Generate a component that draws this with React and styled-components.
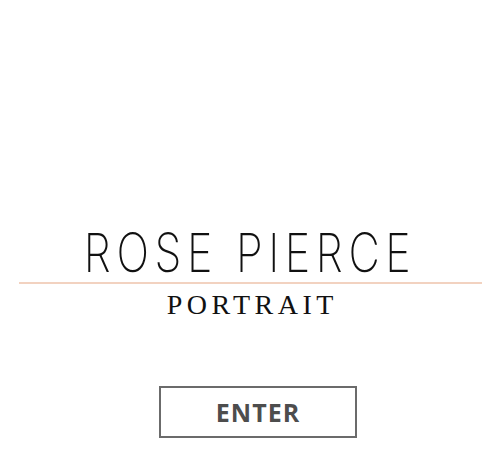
import * as React from 'react';
import styled, { createGlobalStyle } from 'styled-components';

const GlobalStyle = createGlobalStyle`
  html, body {
    margin: 0;
    padding: 0;
    background: #fff;
  }
`;

const Page = styled.div`
  width: 500px;
  height: 462px;
  display: flex;
  flex-direction: column;
  align-items: center;
  padding-top: 226px;
  box-sizing: border-box;
`;

const Title = styled.h1`
  margin: 0;
  font-family: Inter, 'DejaVu Sans', sans-serif;
  font-weight: 200;
  font-size: 54px;
  line-height: 54px;
  letter-spacing: 7px;
  text-indent: 7px;
  color: #111;
  transform: translateX(-3px) scaleX(0.8);
  white-space: nowrap;
`;

const Rule = styled.hr`
  width: 463px;
  margin: 2px 0 0;
  border: 0;
  height: 2px;
  background: #f2d2c0;
`;

const Subtitle = styled.h2`
  margin: 6px 0 0;
  font-family: 'Liberation Serif', serif;
  font-weight: 400;
  font-size: 28px;
  line-height: 30px;
  letter-spacing: 4.5px;
  text-indent: 4.5px;
  color: #111;
`;

const EnterButton = styled.button`
  margin-top: 66px;
  width: 198px;
  height: 52px;
  margin-left: 16px;
  border: 2px solid #6b6b6b;
  background: #fff;
  font-family: 'Open Sans', sans-serif;
  font-weight: 700;
  font-size: 25px;
  letter-spacing: 1px;
  color: #4d4d4d;
  padding: 0;
  cursor: pointer;
`;

export default function App() {
  return (
    <>
      <GlobalStyle />
      <Page>
        <Title>ROSE PIERCE</Title>
        <Rule />
        <Subtitle>PORTRAIT</Subtitle>
        <EnterButton>ENTER</EnterButton>
      </Page>
    </>
  );
}
